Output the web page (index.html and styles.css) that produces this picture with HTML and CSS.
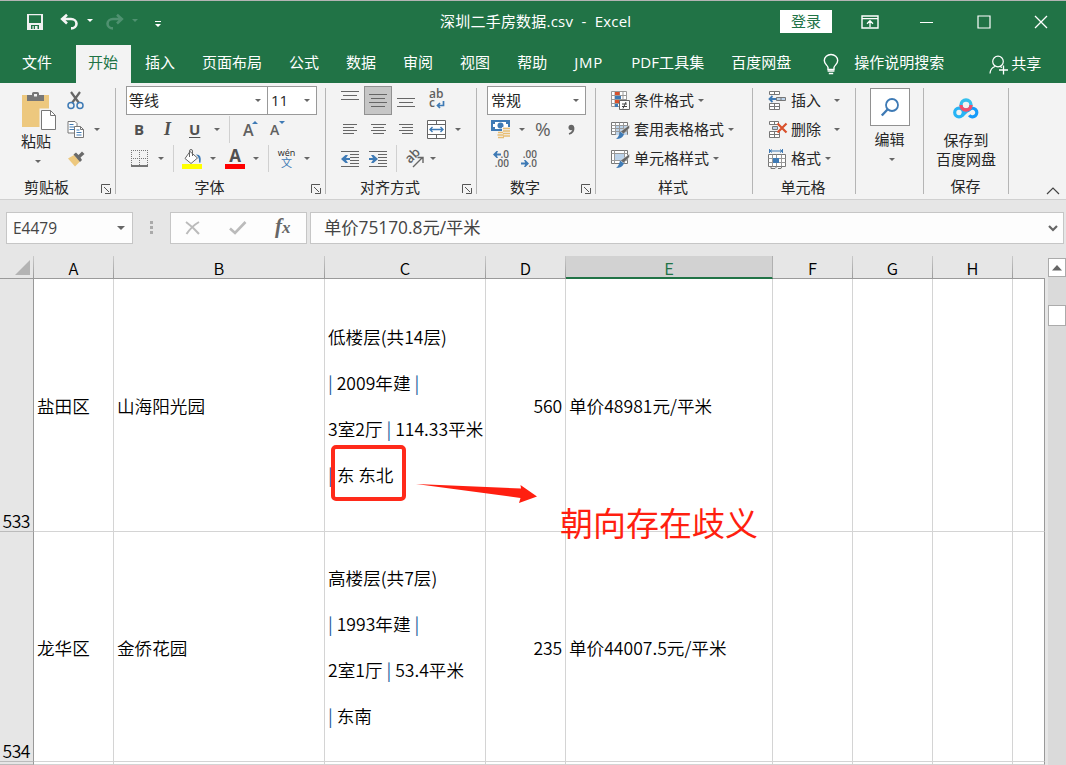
FILE: index.html
```html
<!DOCTYPE html>
<html lang="zh-CN">
<head>
  <meta charset="UTF-8" />
  <title>深圳二手房数据.csv - Excel</title>
  <link rel="stylesheet" href="styles.css">
</head>
<body>
  <div class="titlebar">
    <svg class="save" width="16" height="16" viewBox="0 0 16 16"><path d="M0 0h16v16H0z" fill="#f0f0f0"/><path d="M2 1.3h12v7.7H2zM4 11h8v4H4z" fill="#217346"/><path d="M5.5 12h2v3h-2z" fill="#f0f0f0"/><path d="M8 12h2.500v3H8z" fill="#f0f0f0"/><path d="M6.700 12h1.300v3H6.700z" fill="#217346"/></svg>
    <svg class="undo" width="19" height="16" viewBox="0 0 19 16"><path d="M2 5h9a5.500 4.700 0 0 1 0 9.400M7 .8L2.200 5l4.800 4.500" fill="none" stroke="#f5f5f5" stroke-width="2.600"/></svg>
    <i class="caret white ml-8"></i>
    <svg class="redo" width="19" height="16" viewBox="0 0 19 16"><path d="M17 5H8a5.500 4.700 0 0 0 0 9.400M12 .8L16.800 5 12 9.500" fill="none" stroke="#4f9170" stroke-width="2.600"/></svg>
    <i class="caret dim ml-8"></i>
    <svg class="custom" width="6" height="6" viewBox="0 0 6 6"><path d="M0 0h6v1H0zM0 3h6L3 6z" fill="#fff"/></svg>
    <div class="doc-title">深圳二手房数据.csv&nbsp; -&nbsp; Excel</div>
    <div class="login">登录</div>
    <svg class="ribbon-opt" width="18" height="14" viewBox="0 0 18 14"><path d="M1 1h16v12H1z" fill="none" stroke="#fff" stroke-width="1.400"/><path d="M1 3.700h16M9 12V6M6 8.700l3-3 3 3" fill="none" stroke="#fff" stroke-width="1.300"/></svg>
    <svg class="win-min" width="13" height="14" viewBox="0 0 13 14"><path d="M0 7.500h13" stroke="#fff"/></svg>
    <svg class="win-max" width="14" height="14" viewBox="0 0 14 14"><path d="M1 1h12v12H1z" fill="none" stroke="#fff" stroke-width="1.200"/></svg>
    <svg class="win-close" width="14" height="14" viewBox="0 0 14 14"><path d="M1 1l12 12M13 1L1 13" stroke="#fff" stroke-width="1.300"/></svg>
  </div>

  <div class="tabs">
    <div class="tab file">文件</div>
    <div class="tab active">开始</div>
    <div class="tab">插入</div>
    <div class="tab">页面布局</div>
    <div class="tab">公式</div>
    <div class="tab">数据</div>
    <div class="tab">审阅</div>
    <div class="tab">视图</div>
    <div class="tab">帮助</div>
    <div class="tab jmp">JMP</div>
    <div class="tab pdf">PDF工具集</div>
    <div class="tab">百度网盘</div>
    <svg class="bulb" width="16" height="21" viewBox="0 0 16 21"><path d="M5 15.500v-2.200C4.500 11.300 1.300 10 1.300 6.500a6.500 5.800 0 0 1 13.400 0c0 3.500-3.200 4.800-3.700 6.800v2.200z" fill="none" stroke="#fff" stroke-width="1.400"/><path d="M4.600 17h6.800M5.800 19.500h4.400" stroke="#fff" stroke-width="1.600"/></svg>
    <div class="tell">操作说明搜索</div>
    <svg class="person" width="19" height="20" viewBox="0 0 19 20"><circle cx="9" cy="6.500" r="5.300" fill="none" stroke="#fff" stroke-width="1.200"/><path d="M1 18.500c.3-4 2-6 5-7M11 11.500l2 1" fill="none" stroke="#fff" stroke-width="1.200"/><path d="M14.500 10.500v9M10 15h9" stroke="#fff" stroke-width="1.300"/></svg>
    <div class="share">共享</div>
  </div>

  <div class="ribbon">
    <div class="group clipboard">
      <div class="group-body">
        <div class="paste">
          <svg width="35" height="39" viewBox="0 0 35 39"><path d="M0 3h27v32H0z" fill="#edc87e"/><path d="M5 3h5V1.500Q10 0 11.500 0h4Q17 0 17 1.500V3h5v6H5z" fill="#777"/><path d="M12 2h3v2.500h-3z" fill="#f3f3f3"/><path d="M19 18h9.500l5.500 5.500V38H19z" fill="#fff" stroke="#f3f3f3" stroke-width="3"/><path d="M19.500 18.500h9l5 5V37.500h-14z" fill="#fff" stroke="#777"/><path d="M28.500 18.500v5h5" fill="none" stroke="#777"/></svg>
          <span>粘贴</span>
          <i class="caret"></i>
        </div>
        <div class="clip-tools">
          <div class="row">
            <svg width="18" height="19" viewBox="0 0 18 19"><path d="M4 1l8 11M13 1L5 12" stroke="#666" stroke-width="2.200"/><circle cx="4" cy="14.500" r="3" fill="none" stroke="#3e7ab5" stroke-width="1.500"/><circle cx="13" cy="14.500" r="3" fill="none" stroke="#3e7ab5" stroke-width="1.500"/></svg>
          </div>
          <div class="row">
            <svg width="18" height="19" viewBox="0 0 18 19"><path d="M1 1.500h7l2 2V13H1z" fill="#fff" stroke="#777"/><path d="M2.500 4.500h4M2.500 7h5M2.500 9.500h5" stroke="#3e7ab5"/><path d="M7.500 6.500h6l3 3v8h-9z" fill="#fff" stroke="#777"/><path d="M13.500 6.500v3h3" fill="none" stroke="#777"/><path d="M9.500 10h3M9.500 12.500h5M9.500 15h5" stroke="#3e7ab5"/></svg>
            <i class="caret ml-9"></i>
          </div>
          <div class="row">
            <svg width="18" height="16" viewBox="0 0 18 16"><path d="M1 7.500L7 4l6 6.500-5 5z" fill="#edc87e"/><path d="M6.500 3.500L9 1.500l2.500 2.500L15 .5 17.500 3l-4 3.500L15 9l-2 2z" fill="#6a6a6a"/></svg>
          </div>
        </div>
      </div>
      <div class="label"><span>剪贴板</span><svg class="launch" width="10" height="10" viewBox="0 0 10 10"><path d="M.5 9V.5H9M3 3l5 5M9.500 4v5.500H4" fill="none" stroke="#555"/></svg></div>
    </div>
    <div class="sep"></div>

    <div class="group font">
      <div class="group-rows">
        <div class="row ml-10">
          <div class="combo family"><span>等线</span><i class="caret"></i></div>
          <div class="combo size"><span>11</span><i class="caret"></i></div>
        </div>
        <div class="row">
          <b class="fmt bold">B</b>
          <b class="fmt italic">I</b>
          <b class="fmt under">U</b>
          <i class="caret ml-13"></i>
          <div class="bar ml-9"></div>
          <div class="grow ml-13"><b>A</b><svg width="6" height="3" viewBox="0 0 6 3"><path d="M0 3h6L3 0z" fill="#3e7ab5"/></svg></div>
          <div class="grow shrink ml-12"><b>A</b><svg width="6" height="3" viewBox="0 0 6 3"><path d="M0 0h6L3 3z" fill="#3e7ab5"/></svg></div>
        </div>
        <div class="row">
          <svg class="ml-15" width="17" height="17" viewBox="0 0 17 17"><path d="M.5 0v16M8.500 0v16M16.500 0v16M0 .5h17M0 8.500h17" stroke="#777" stroke-dasharray="1 1"/><path d="M0 16h17" stroke="#555" stroke-width="1.600"/></svg>
          <i class="caret ml-10"></i>
          <div class="bar ml-9"></div>
          <svg class="ml-8" width="21" height="20" viewBox="0 0 21 20"><path d="M8 2.500l7.500 6.500-6.500 5.500L3 9.500z" fill="#fff" stroke="#666"/><path d="M7.500 8V2q0-1.500 1.500-1.500T10.500 2v5" fill="none" stroke="#666"/><path d="M14 5.500q6-.5 4.500 8-1.500 1-1.500-1 .5-4-3-7z" fill="#3e7ab5"/><path d="M0 15h20v5H0z" fill="#ff0"/></svg>
          <i class="caret ml-7"></i>
          <div class="font-color ml-9"><b>A</b></div>
          <i class="caret ml-8"></i>
          <div class="bar ml-9"></div>
          <div class="wen"><span>wén</span><span>文</span></div>
          <i class="caret ml-9"></i>
        </div>
      </div>
      <div class="label"><span>字体</span><svg class="launch" width="10" height="10" viewBox="0 0 10 10"><path d="M.5 9V.5H9M3 3l5 5M9.500 4v5.500H4" fill="none" stroke="#555"/></svg></div>
    </div>
    <div class="sep"></div>

    <div class="group align">
      <div class="group-rows">
        <div class="row">
          <svg class="lines ml-15" width="18" height="20" viewBox="0 0 18 20"><path d="M0 .5h18M2 4.500h14M0 8.500h18"/></svg>
          <div class="pressed"><svg class="lines" width="18" height="13" viewBox="0 0 18 13"><path d="M0 .5h18M2 4.500h14M0 8.500h18M2 12.500h14"/></svg></div>
          <svg class="lines ml-5" width="18" height="16" viewBox="0 0 18 16"><path d="M0 5.500h18M2 9.500h14M0 13.500h18"/></svg>
          <div class="wrap-text ml-14"><span>ab</span><span>c<svg width="9" height="8" viewBox="0 0 9 8"><path d="M7.500 0v4.500H2M4 2L1.500 4.500 4 7" fill="none" stroke="#3e7ab5" stroke-width="1.700"/></svg></span></div>
        </div>
        <div class="row">
          <svg class="lines ml-17" width="14" height="12" viewBox="0 0 14 12"><path d="M0 .5h14M0 3.500h11M0 6.500h14M0 9.500h11"/></svg>
          <svg class="lines ml-14" width="15" height="12" viewBox="0 0 15 12"><path d="M0 .5h15M2 3.500h11M0 6.500h15M2 9.500h11"/></svg>
          <svg class="lines ml-13" width="14" height="12" viewBox="0 0 14 12"><path d="M0 .5h14M3 3.500h11M0 6.500h14M3 9.500h11"/></svg>
          <svg class="ml-14" width="19" height="19" viewBox="0 0 19 19"><path d="M.5.500h18v18H.5zM.5 4.500h18M.5 14.500h18M9.500.5v4M9.500 14.500v4" fill="#fff" stroke="#666"/><path d="M3 9.500h13M5.500 7L3 9.500 5.500 12M13.500 7l2.500 2.500-2.500 2.500" fill="none" stroke="#3e7ab5" stroke-width="1.400"/></svg>
          <i class="caret ml-9"></i>
        </div>
        <div class="row">
          <svg class="lines ml-15" width="18" height="16" viewBox="0 0 18 16"><path d="M0 .5h18M9 3.500h9M9 6.500h9M9 9.500h9M9 12.500h9M0 15.500h18"/><path class="blue" d="M0 8l4.500-4h2.500L5 7h4v2H5l2 3H4.500z"/></svg>
          <svg class="lines ml-10" width="18" height="16" viewBox="0 0 18 16"><path d="M0 .5h18M9 3.500h9M9 6.500h9M9 9.500h9M9 12.500h9M0 15.500h18"/><path class="blue" d="M9 8L4.500 4H2l2 3H0v2h4l-2 3h2.500z"/></svg>
          <div class="bar ml-9"></div>
          <svg class="ml-8" width="19" height="18" viewBox="0 0 19 18"><text x="0" y="0" class="tiny" font-size="13" transform="translate(5 14) rotate(-45)">ab</text><path d="M8 17l9-9M12.500 7.500H18V13" fill="none" stroke="#666" stroke-width="1.400"/></svg>
          <i class="caret ml-6"></i>
        </div>
      </div>
      <div class="label"><span>对齐方式</span><svg class="launch" width="10" height="10" viewBox="0 0 10 10"><path d="M.5 9V.5H9M3 3l5 5M9.500 4v5.500H4" fill="none" stroke="#555"/></svg></div>
    </div>
    <div class="sep"></div>

    <div class="group number">
      <div class="group-rows">
        <div class="row ml-10">
          <div class="combo general"><span>常规</span><i class="caret"></i></div>
        </div>
        <div class="row">
          <svg class="ml-14" width="20" height="19" viewBox="0 0 20 19"><path d="M0 0h19v11H0z" fill="#3e7ab5"/><path d="M2 2h15v7H2z" fill="#fff"/><path d="M2 2h2v2H2zM15 2h2v2h-2zM2 7h2v2H2z" fill="#3e7ab5"/><circle cx="9.500" cy="5.500" r="3" fill="#3e7ab5"/><path d="M11 7h9v12H6v-8h5z" fill="#f3f3f3"/><path d="M12 8.500h7M12 11h7M12 13.500h7M12 16h7M7 12.500h5M6.500 15h6M7 17.500h6" stroke="#e8bd72" stroke-width="1.700"/></svg>
          <i class="caret ml-8"></i>
          <span class="percent">%</span>
          <svg class="comma" width="8" height="12" viewBox="0 0 8 12"><path d="M6.500 3.500Q7 8.500 2 10" fill="none" stroke="#666" stroke-width="1.800"/><circle cx="4.300" cy="3.500" r="2.800" fill="#666"/></svg>
        </div>
        <div class="row">
          <div class="decimals ml-16">
            <span><svg width="8" height="7" viewBox="0 0 8 7"><path d="M0 3.500L3.500 0H5L3.800 2.600H8v1.800H3.800L5 7H3.500z" fill="#3e7ab5"/></svg>.0</span>
            <span>.00</span>
          </div>
          <div class="decimals ml-12">
            <span>.00</span>
            <span><svg width="8" height="7" viewBox="0 0 8 7"><path d="M8 3.500L4.500 0H3l1.200 2.600H0v1.800h4.200L3 7h1.500z" fill="#3e7ab5"/></svg>.0</span>
          </div>
        </div>
      </div>
      <div class="label"><span>数字</span><svg class="launch" width="10" height="10" viewBox="0 0 10 10"><path d="M.5 9V.5H9M3 3l5 5M9.500 4v5.500H4" fill="none" stroke="#555"/></svg></div>
    </div>
    <div class="sep"></div>

    <div class="group styles">
      <div class="group-rows">
        <div class="row ml-15">
          <svg width="19" height="19" viewBox="0 0 19 19"><path d="M.5.500h15v15H.5zM4 .5v15M8.500.5v15M12 .5v15M.5 4.500h15M.5 8.500h15M.5 12.500h15" fill="#fff" stroke="#999"/><path d="M4 1h4.500v3H4zM4 9h4.500v3H4z" fill="#d9512c"/><path d="M4 5h6v3H4zM4 13h3v3H4z" fill="#3e7ab5"/><path d="M8.500 9.500h10v9h-10z" fill="#fff" stroke="#666"/><path d="M11 13h5M11 15.500h5M15 11l-3 6.500" stroke="#444"/></svg>
          <span class="cmd">条件格式</span><i class="caret ml-4"></i>
        </div>
        <div class="row ml-15">
          <svg width="19" height="18" viewBox="0 0 19 18"><path d="M.5 1.500h16v12H.5z" fill="#fff" stroke="#777"/><path d="M5 5h11v9H5z" fill="#bcd3ea"/><path d="M.5 4.500h16M.5 7.500h16M.5 10.500h16M4.500 1.500v12M8.500 1.500v12M12.500 1.500v12" stroke="#999"/><path d="M18.500 4v3l-6 6-3-2.500z" fill="#666" stroke="#f3f3f3" stroke-width=".5"/><path d="M9 10.500l4 3q-2 4.500-8 4.500 3-2 4-7.500z" fill="#3e7ab5"/></svg>
          <span class="cmd">套用表格格式</span><i class="caret ml-4"></i>
        </div>
        <div class="row ml-15">
          <svg width="19" height="18" viewBox="0 0 19 18"><path d="M.5.500h16v13H.5z" fill="#fff" stroke="#777"/><path d="M4 3.500h9v7H4z" fill="#bcd3ea"/><path d="M.5 3.500h16M.5 10.500h16M3.500.5v13M13.500.5v13" stroke="#999"/><path d="M18.500 4v3l-6 6-3-2.500z" fill="#666" stroke="#f3f3f3" stroke-width=".5"/><path d="M9 10.500l4 3q-2 4.500-8 4.500 3-2 4-7.500z" fill="#3e7ab5"/></svg>
          <span class="cmd">单元格样式</span><i class="caret ml-4"></i>
        </div>
      </div>
      <div class="label"><span>样式</span></div>
    </div>
    <div class="sep"></div>

    <div class="group cells">
      <div class="group-rows">
        <div class="row ml-15">
          <svg width="19" height="19" viewBox="0 0 19 19"><path d="M1.500.500h10v3h-10zM6.500.5v3M1.500 12.500h10v6h-10zM6.500 12.500v6M1.500 15.500h10" fill="#fff" stroke="#777"/><path d="M8.500 6.500h9v3h-9zM13 6.500v3" fill="#bcd3ea" stroke="#777"/><path d="M8 8H2M4.500 5L1.500 8l3 3" fill="none" stroke="#3e7ab5" stroke-width="1.800"/></svg>
          <span class="cmd">插入</span><i class="caret ml-13"></i>
        </div>
        <div class="row ml-15">
          <svg width="19" height="19" viewBox="0 0 19 19"><path d="M1.500 1.500h9v3h-9zM6.500 1.500v3M1.500 11.500h10v6h-10zM6.500 11.500v6M1.500 14.500h10" fill="#fff" stroke="#777"/><path d="M4.500 6.500h5v3h-5z" fill="#bcd3ea" stroke="#777"/><path d="M9.500 3.500l9 9M18.500 3.500l-9 9" stroke="#d9512c" stroke-width="2.200"/></svg>
          <span class="cmd">删除</span><i class="caret ml-13"></i>
        </div>
        <div class="row ml-15">
          <svg width="19" height="20" viewBox="0 0 19 20"><path d="M1.500 0v4M14.500 0v4M2 2h12M4 .5L2 2l2 1.500M12 .5L14 2l-2 1.500" fill="none" stroke="#3e7ab5"/><path d="M.5 5.500h17v12H.5z" fill="#fff" stroke="#777"/><path d="M.5 9.500h17M.5 13.500h17M4.500 5.500v12M8.500 5.500v12M13.500 5.500v12" stroke="#999"/><path d="M5 9h6v5H5z" fill="#3e7ab5"/><path d="M3 17.500v2h4l2-2M10 19.500h3l1-2" fill="none" stroke="#777"/></svg>
          <span class="cmd">格式</span><i class="caret ml-4"></i>
        </div>
      </div>
      <div class="label"><span>单元格</span></div>
    </div>
    <div class="sep"></div>

    <div class="group edit">
      <div class="edit-box"><svg width="18" height="19" viewBox="0 0 18 19"><circle cx="11" cy="7" r="6" fill="none" stroke="#3e7ab5" stroke-width="1.800"/><path d="M6.500 11.500L.8 17.500" stroke="#3e7ab5" stroke-width="2.400"/></svg></div>
      <span>编辑</span>
      <i class="caret"></i>
    </div>
    <div class="sep"></div>

    <div class="group netdisk">
      <div class="netdisk-body">
        <svg width="26" height="22" viewBox="0 0 26 22"><circle cx="6" cy="14.500" r="4.300" fill="none" stroke="#27b4f5" stroke-width="3.200"/><path d="M9 17.500l6-5.500" stroke="#27b4f5" stroke-width="3.200"/><path d="M16.200 17.300a4.300 4.300 0 1 0 .3-5.800l-2 1.500" fill="none" stroke="#159bfa" stroke-width="3.200"/><circle cx="13" cy="7" r="5" fill="none" stroke="#35c0ee" stroke-width="3.400"/><path d="M8 7a5 5 0 0 0 10 0" fill="none" stroke="#f04f6c" stroke-width="3.400"/></svg>
        <span>保存到</span>
        <span>百度网盘</span>
      </div>
      <div class="label"><span>保存</span></div>
    </div>
    <div class="sep"></div>
    <svg class="collapse" width="14" height="8" viewBox="0 0 14 8"><path d="M1 7l6-6 6 6" fill="none" stroke="#444" stroke-width="1.200"/></svg>
  </div>

  <div class="formula-bar">
    <div class="name-box"><span>E4479</span><i class="caret"></i></div>
    <div class="dots"><i></i><i></i><i></i></div>
    <div class="fx-box">
      <svg width="16" height="14" viewBox="0 0 16 14"><path d="M1 1q7 5 13 12M14 1Q7 5 1.500 13" fill="none" stroke="#bbb" stroke-width="2"/></svg>
      <svg width="18" height="14" viewBox="0 0 18 14"><path d="M1 7.500l5 4.500L16.500 1" fill="none" stroke="#bbb" stroke-width="2.600"/></svg>
      <span class="fx">f<small>x</small></span>
    </div>
    <div class="formula"><span>单价75170.8元/平米</span><svg width="10" height="7" viewBox="0 0 10 7"><path d="M1 1l4 4 4-4" fill="none" stroke="#666" stroke-width="2.200"/></svg></div>
  </div>

  <div class="sheet">
    <div class="grid">
      <div class="head corner"><svg width="15" height="15" viewBox="0 0 15 15"><path d="M15 0v15H0z" fill="#b3b3b3"/></svg></div>
      <div class="head">A</div>
      <div class="head">B</div>
      <div class="head">C</div>
      <div class="head">D</div>
      <div class="head selected">E</div>
      <div class="head">F</div>
      <div class="head">G</div>
      <div class="head">H</div>
      <div class="head last"></div>

      <div class="rownum">533</div>
      <div class="cell">盐田区</div>
      <div class="cell">山海阳光园</div>
      <div class="cell"><p>低楼层(共14层)</p><p><em>|</em> 2009年建 <em>|</em></p><p>3室2厅 <em>|</em> 114.33平米</p><p><em>|</em> 东 东北</p></div>
      <div class="cell num">560</div>
      <div class="cell">单价48981元/平米</div>
      <div class="cell"></div>
      <div class="cell"></div>
      <div class="cell"></div>
      <div class="cell last"></div>

      <div class="rownum">534</div>
      <div class="cell">龙华区</div>
      <div class="cell">金侨花园</div>
      <div class="cell"><p>高楼层(共7层)</p><p><em>|</em> 1993年建 <em>|</em></p><p>2室1厅 <em>|</em> 53.4平米</p><p><em>|</em> 东南</p></div>
      <div class="cell num">235</div>
      <div class="cell">单价44007.5元/平米</div>
      <div class="cell"></div>
      <div class="cell"></div>
      <div class="cell"></div>
      <div class="cell last"></div>

      <div class="rownum"></div>
      <div class="cell"></div>
      <div class="cell"></div>
      <div class="cell"></div>
      <div class="cell"></div>
      <div class="cell"></div>
      <div class="cell"></div>
      <div class="cell"></div>
      <div class="cell"></div>
      <div class="cell last"></div>
    </div>
    <div class="scrollbar">
      <div class="scroll-up"><svg width="10" height="6" viewBox="0 0 10 6"><path d="M0 5.500L5 0l5 5.500z" fill="#666"/></svg></div>
      <div class="thumb"></div>
    </div>

    <!-- annotations over the cells -->
    <div class="mark-box"></div>
    <svg class="mark-arrow" width="122" height="20" viewBox="0 0 122 20"><path d="M0 0l105 4.500L104.500 1 121 12.500 103 19l1.500-5z" fill="#ff1f10"/></svg>
    <div class="mark-text">朝向存在歧义</div>
  </div>
</body>
</html>
```

FILE: styles.css
```css
* {
  box-sizing: border-box;
}
body {
  margin: 0;
  width: 1066px;
  height: 765px;
  overflow: hidden;
  background: #e6e6e6;
  font-family: "Open Sans", "Noto Sans CJK SC", sans-serif;
  font-size: 15px;
  color: #262626;
}
svg {
  display: block;
  flex: none;
  overflow: visible;
}
span {
  white-space: nowrap;
}

/* spacing helpers */
.ml-4 { margin-left: 4px; }
.ml-5 { margin-left: 5px; }
.ml-6 { margin-left: 6px; }
.ml-7 { margin-left: 7px; }
.ml-8 { margin-left: 8px; }
.ml-9 { margin-left: 9px; }
.ml-10 { margin-left: 10px; }
.ml-12 { margin-left: 12px; }
.ml-13 { margin-left: 13px; }
.ml-14 { margin-left: 14px; }
.ml-15 { margin-left: 15px; }
.ml-16 { margin-left: 16px; }
.ml-17 { margin-left: 17px; }

.caret {
  flex: none;
  width: 0;
  height: 0;
  border: 3px solid transparent;
  border-top-color: #666;
  border-bottom: 0;
}
.caret.white { border-top-color: #fff; }
.caret.dim { border-top-color: #4f9170; }

/* title bar */
.titlebar {
  display: flex;
  align-items: center;
  height: 45px;
  padding-bottom: 3px;
  border-top: 1px solid #b4b4b4;
  background: #217346;
  color: #fff;
}
.titlebar .caret { margin-bottom: 2px; }
.save { margin-left: 27px; }
.undo { margin-left: 17px; }
.redo { margin-left: 12px; }
.custom { margin: 4px 0 0 17px; }
.doc-title {
  width: 191px;
  margin-left: 279px;
  padding-bottom: 2px;
  white-space: nowrap;
  letter-spacing: 0.22px;
}
.login {
  width: 52px;
  height: 23px;
  margin-left: 149px;
  line-height: 22px;
  text-align: center;
  background: #fff;
  color: #217346;
}
.ribbon-opt { margin-left: 29px; }
.win-min { margin-left: 41px; }
.win-max { margin-left: 44px; }
.win-close { margin-left: 43px; }

/* tabs */
.tabs {
  display: flex;
  height: 38px;
  line-height: 34px;
  background: #217346;
  color: #fff;
}
.tab {
  flex: none;
  margin-right: 2px;
  padding: 0 13px 0 12px;
  white-space: nowrap;
}
.tab.file { margin: 0 11px 0 10px; padding-right: 13px; }
.tab.active {
  background: #f3f3f3;
  color: #217346;
}
.tab.jmp { width: 55px; letter-spacing: 0.8px; }
.tab.pdf { width: 98px; letter-spacing: 0.1px; }
.bulb { margin: 9px 0 0 17px; }
.tell { margin-left: 15px; line-height: 35px; white-space: nowrap; }
.person { margin: 10px 0 0 45px; }
.share { margin-left: 3px; line-height: 37px; }

/* ribbon */
.ribbon {
  display: flex;
  height: 117px;
  background: #f3f3f3;
  border-bottom: 1px solid #d0d0d0;
}
.sep {
  width: 1px;
  height: 106px;
  margin-top: 5px;
  background: #b5b5b5;
}
.group {
  display: flex;
  flex-direction: column;
  flex: none;
  padding-top: 3px;
}
.clipboard { width: 115px; }
.font { width: 209px; }
.align { width: 150px; }
.number { width: 118px; }
.styles { width: 156px; }
.cells { width: 102px; }
.edit { width: 67px; }
.netdisk { width: 84px; }
.group-body {
  display: flex;
  height: 87px;
}
.group-rows {
  height: 87px;
}
.row {
  display: flex;
  align-items: center;
  height: 29px;
}
.label {
  display: flex;
  align-items: center;
  height: 28px;
}
.label span {
  flex: 1;
  padding-right: 2px;
  text-align: center;
}
.launch { margin: 5px 4px 0 6px; }
.paste {
  display: flex;
  flex-direction: column;
  width: 35px;
  margin: 6px 0 0 21px;
}
.paste svg { margin-left: 1px; }
.paste span {
  margin-top: -1px;
  line-height: 22px;
}
.paste .caret { margin: 8px 0 0 14px; }
.clip-tools { margin-left: 11px; }
.combo {
  display: flex;
  align-items: center;
  justify-content: space-between;
  height: 29px;
  padding: 0 6px 2px 2px;
  border: 1px solid #999;
  background: #fff;
}
.combo .caret { margin-top: 2px; }
.family { width: 142px; }
.size { width: 50px; margin-left: -1px; padding-left: 3px; }
.general { width: 99px; padding-left: 3px; }
.bar {
  width: 1px;
  height: 27px;
  background: #d0d0d0;
}
.fmt {
  padding-bottom: 1px;
  font-size: 15px;
  line-height: 18px;
  color: #505050;
}
.bold { width: 11px; margin-left: 18px; }
.italic {
  width: 9px;
  margin-left: 19px;
  font-family: "Liberation Serif", serif;
  font-style: italic;
  font-size: 18px;
}
.under {
  width: 12px;
  margin-left: 16px;
  text-decoration: underline;
  text-underline-offset: 2px;
  text-decoration-thickness: 1px;
}
.grow {
  display: flex;
  width: 15px;
  height: 20px;
  font-size: 16px;
  line-height: 20px;
  color: #606060;
}
.grow b { width: 9px; font-weight: 600; }
.grow.shrink { font-size: 14px; }
.grow svg { margin-top: 1px; }
.font-color {
  width: 20px;
  height: 20px;
  border-bottom: 5px solid red;
  text-align: center;
  font-size: 17px;
  line-height: 13px;
  color: #505050;
}
.tiny {
  font-family: "Open Sans", sans-serif;
  font-weight: 600;
  fill: #606060;
}
.wrap-text {
  display: flex;
  flex-direction: column;
  width: 17px;
  font-size: 12px;
  font-weight: 600;
  line-height: 8px;
  color: #606060;
  margin-bottom: 3px;
}
.wrap-text span { display: flex; align-items: center; gap: 1px; }
.wrap-text svg { margin-top: 3px; }
.decimals {
  display: flex;
  flex-direction: column;
  width: 16px;
  font-size: 10px;
  font-weight: 600;
  line-height: 9px;
  color: #606060;
}
.decimals span {
  display: flex;
  align-items: center;
  justify-content: flex-end;
}
.wen {
  display: flex;
  flex-direction: column;
  align-items: center;
  width: 17px;
  margin-left: 9px;
  font-size: 9px;
  line-height: 8px;
}
.wen span + span {
  font-size: 11px;
  line-height: 11px;
  color: #3e7ab5;
}
.lines {
  fill: none;
  stroke: #666;
}
.lines .blue {
  fill: #3e7ab5;
  stroke: none;
}
.pressed {
  display: flex;
  align-items: center;
  justify-content: center;
  width: 28px;
  height: 29px;
  margin-left: 5px;
  border: 1px solid #919191;
  background: #c6c6c6;
}
.percent {
  width: 17px;
  margin-left: 10px;
  padding-bottom: 1px;
  font-size: 19px;
  color: #606060;
}
.comma { margin-left: 15px; }
.cmd { margin-left: 4px; padding-bottom: 2px; }
.edit {
  align-items: center;
  padding-top: 5px;
}
.edit-box {
  display: flex;
  align-items: center;
  justify-content: center;
  width: 40px;
  height: 38px;
  border: 1px solid #919191;
  background: #fff;
}
.edit span {
  margin-top: 1px;
  line-height: 24px;
}
.edit .caret { margin: 7px 0 0 5px; }
.netdisk-body {
  display: flex;
  flex-direction: column;
  align-items: center;
  height: 87px;
  padding-top: 12px;
}
.netdisk-body svg { margin-bottom: 11px; }
.netdisk-body span { line-height: 19px; }
.netdisk .label span { padding: 0 1px 0 0; }
.collapse { margin: 104px 0 0 37px; }

/* formula bar */
.formula-bar {
  display: flex;
  height: 56px;
  padding: 12px 2px 12px 6px;
  color: #444;
}
.name-box,
.fx-box,
.formula {
  display: flex;
  align-items: center;
  border: 1px solid #c6c6c6;
  background: #fdfdfd;
}
.name-box {
  justify-content: space-between;
  width: 127px;
  padding: 0 7px 0 6px;
  font-size: 15.5px;
}
.name-box .caret { border-width: 4px 4px 0; }
.dots {
  display: flex;
  flex-direction: column;
  gap: 2px;
  width: 3px;
  margin: 9px 17px 0;
}
.dots i {
  height: 3px;
  background: #aaa;
}
.fx-box {
  width: 137px;
  padding-left: 14px;
}
.fx-box svg + svg { margin-left: 28px; }
.fx {
  margin: -3px 0 0 28px;
  font: italic bold 21px "Liberation Serif", serif;
  color: #666;
}
.fx small { font-size: 17px; }
.formula {
  flex: 1;
  justify-content: space-between;
  margin-left: 3px;
  padding: 0 5px 0 13px;
  font-size: 17.3px;
}
.formula span { padding-bottom: 3px; }

/* sheet */
.sheet {
  position: relative;
  display: flex;
  height: 509px;
  font-family: "Noto Sans CJK SC", sans-serif;
  font-weight: 350;
  font-size: 17.6px;
  color: #000;
}
.grid {
  display: grid;
  grid-template-columns: 34px 80px 211px 161px 80px 207px 80px 80px 80px 32px;
  grid-template-rows: 23px 253px 230px 3px;
  width: 1045px;
}
.head {
  border-right: 1px solid;
  border-bottom: 1px solid #999;
  border-image: linear-gradient(#ccc, #999) 1;
  font-size: 16.5px;
  line-height: 24px;
  text-align: center;
}
.head.corner {
  display: flex;
  justify-content: flex-end;
  padding: 4px 3px 0 0;
}
.head.selected {
  border-image: none;
  border-right-color: #b0b0b0;
  border-bottom: 2px solid #217346;
  background: #d2d2d2;
  color: #217346;
}
.head.last { border-right: 0; }
.rownum {
  display: flex;
  align-items: flex-end;
  justify-content: flex-end;
  padding: 0 3px 1px 0;
  border-right: 1px solid #999;
  border-bottom: 1px solid #bbb;
  line-height: 19px;
  letter-spacing: -0.5px;
}
.cell {
  display: flex;
  flex-direction: column;
  justify-content: center;
  padding: 1px 3px 0;
  border-right: 1px solid #d4d4d4;
  border-bottom: 1px solid #d4d4d4;
  background: #fff;
  white-space: nowrap;
}
.cell.num { align-items: flex-end; letter-spacing: -0.2px; }
.cell.last { border-right-color: #999; }
.cell p {
  margin: 0;
  line-height: 46px;
}
.cell em {
  font-style: normal;
  font-weight: 400;
  color: #1f5f9e;
}
.scrollbar {
  width: 18px;
  margin: 2px 0 0 3px;
  background: #dadada;
}
.scroll-up {
  display: flex;
  align-items: center;
  justify-content: center;
  height: 19px;
  border: 1px solid #ababab;
  background: #fff;
}
.thumb {
  height: 21px;
  margin-top: 28px;
  border: 1px solid #ababab;
  background: #fff;
}

.mark-box {
  position: absolute;
  left: 331px;
  top: 189px;
  width: 75px;
  height: 56px;
  border: 4px solid #ff2a1a;
  border-radius: 5px;
}
.mark-arrow {
  position: absolute;
  left: 416px;
  top: 228px;
}
.mark-text {
  position: absolute;
  left: 560px;
  top: 243px;
  font-size: 33px;
  font-weight: 400;
  line-height: 46px;
  color: #ff1f10;
  white-space: nowrap;
}
```
